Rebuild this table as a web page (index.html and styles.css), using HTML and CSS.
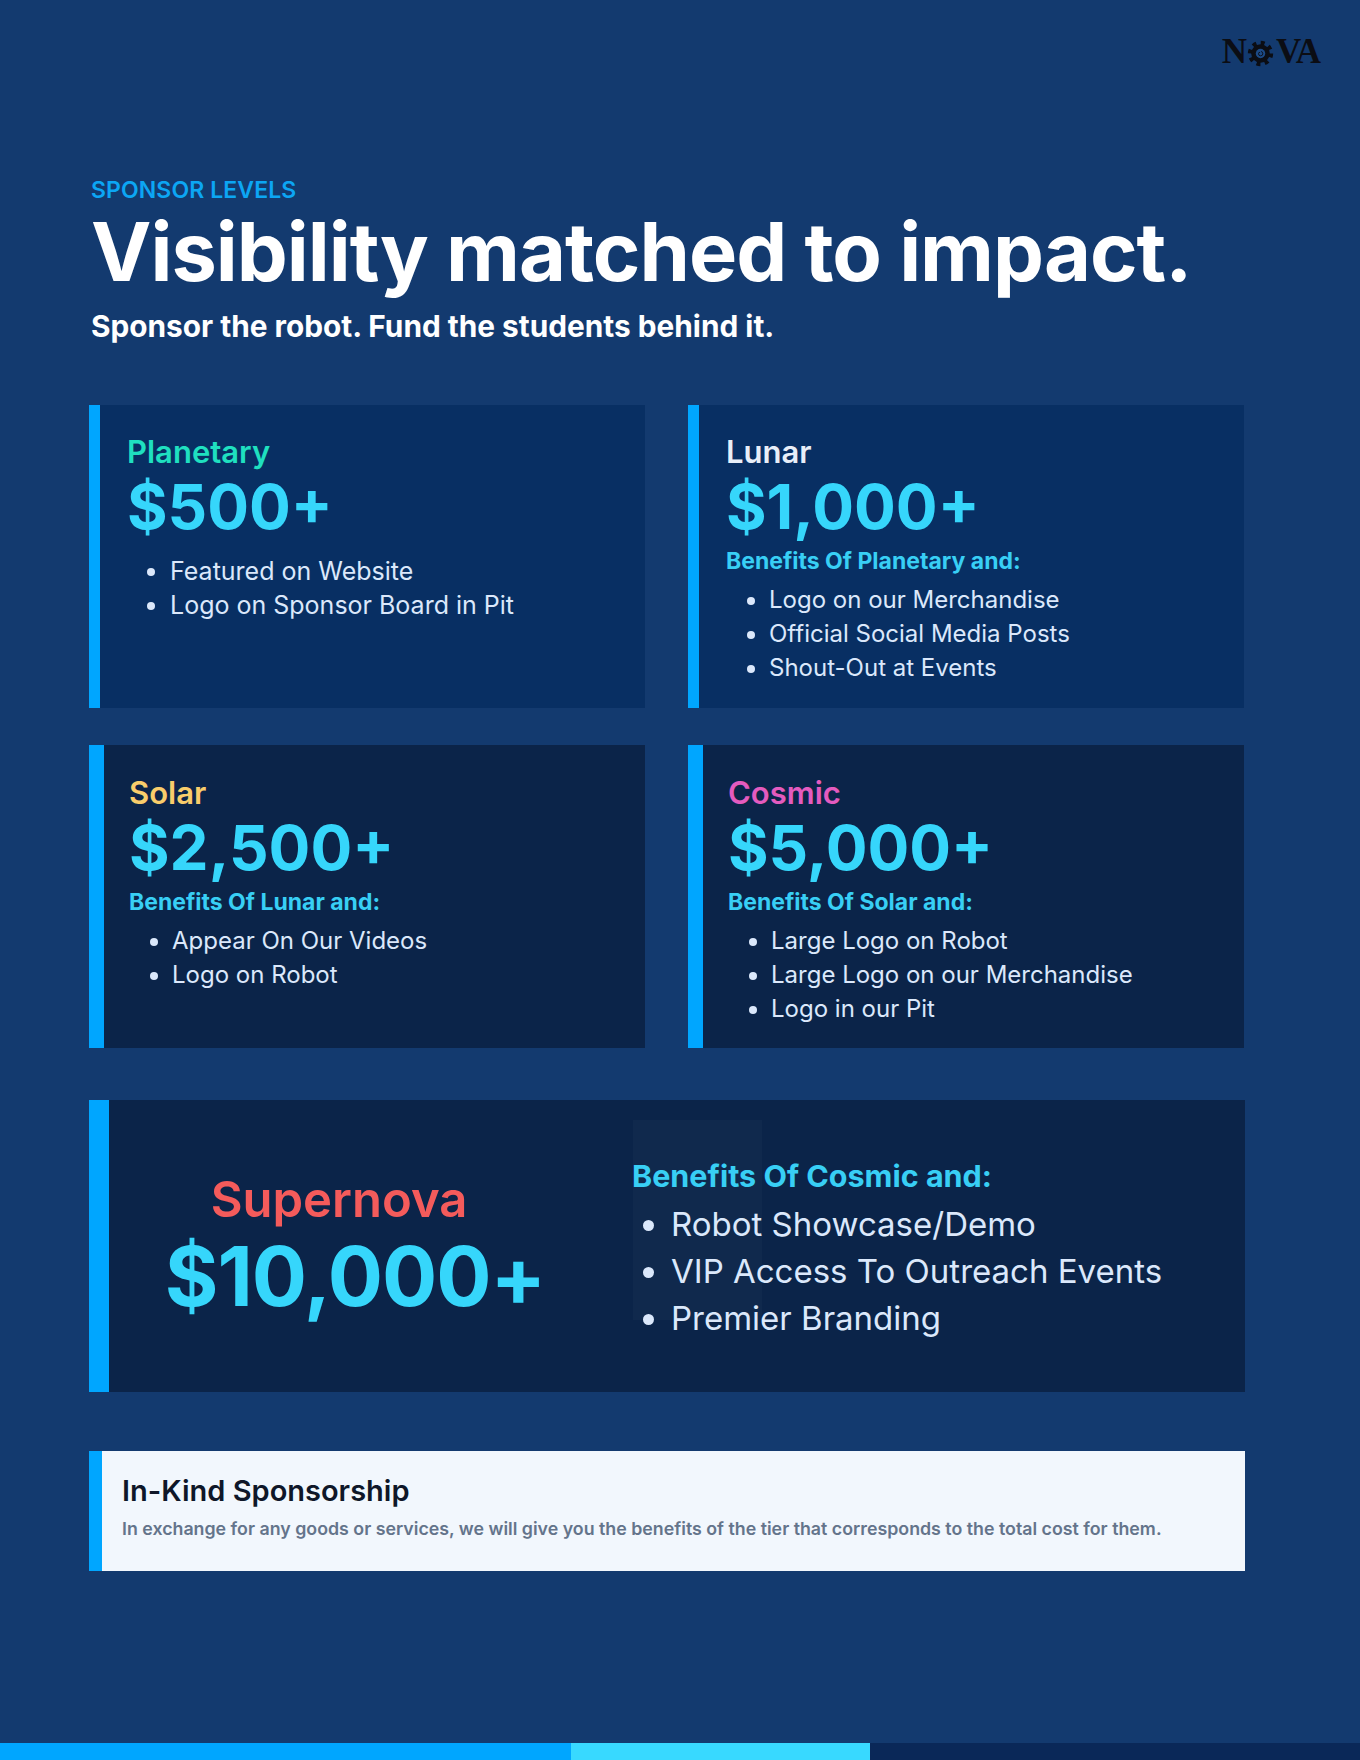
FILE: index.html
```html
<!DOCTYPE html>
<html lang="en">
<head>
<meta charset="utf-8">
<title>Sponsor Levels</title>
<link rel="stylesheet" href="styles.css">
</head>
<body>
<div class="page">
  <header class="topbar">
    <div class="logo" aria-label="NOVA">
      <span class="logo-letter">N</span>
      <svg class="logo-gear" viewBox="0 0 32 32" width="27" height="27" aria-hidden="true">
        <circle cx="16" cy="16" r="12.5" fill="none" stroke="#0b0d14" stroke-width="5" stroke-dasharray="4.6 5.2"/>
        <circle cx="16" cy="16" r="11" fill="#0b0d14"/>
        <circle cx="16" cy="16" r="5.6" fill="#1c4a86"/>
        <path d="M16.6 13.6 a2.6 2.6 0 1 1 -3 2.6 a1.7 1.7 0 0 1 1.9 -1.6" fill="none" stroke="#0b0d14" stroke-width="1.1"/>
      </svg>
      <span class="logo-letter">VA</span>
    </div>
  </header>

  <main class="content">
    <div class="intro">
      <p class="eyebrow">SPONSOR LEVELS</p>
      <h1 class="headline">Visibility matched to impact.</h1>
      <p class="subhead">Sponsor the robot. Fund the students behind it.</p>
    </div>

    <section class="tiers">
      <article class="tier tier-top">
        <h2 class="tier-name name-planetary">Planetary</h2>
        <p class="price">$500+</p>
        <ul class="perks perks-direct">
          <li>Featured on Website</li>
          <li>Logo on Sponsor Board in Pit</li>
        </ul>
      </article>

      <article class="tier tier-top">
        <h2 class="tier-name name-lunar">Lunar</h2>
        <p class="price">$1,000+</p>
        <p class="benefits">Benefits Of Planetary and:</p>
        <ul class="perks">
          <li>Logo on our Merchandise</li>
          <li>Official Social Media Posts</li>
          <li>Shout-Out at Events</li>
        </ul>
      </article>

      <article class="tier tier-low">
        <h2 class="tier-name name-solar">Solar</h2>
        <p class="price">$2,500+</p>
        <p class="benefits">Benefits Of Lunar and:</p>
        <ul class="perks">
          <li>Appear On Our Videos</li>
          <li>Logo on Robot</li>
        </ul>
      </article>

      <article class="tier tier-low">
        <h2 class="tier-name name-cosmic">Cosmic</h2>
        <p class="price">$5,000+</p>
        <p class="benefits">Benefits Of Solar and:</p>
        <ul class="perks">
          <li>Large Logo on Robot</li>
          <li>Large Logo on our Merchandise</li>
          <li>Logo in our Pit</li>
        </ul>
      </article>
    </section>

    <section class="supernova">
      <div class="super-left">
        <h2 class="super-name">Supernova</h2>
        <p class="super-price">$10,000+</p>
      </div>
      <div class="super-right">
        <div class="super-ghost" aria-hidden="true"></div>
        <p class="super-benefits">Benefits Of Cosmic and:</p>
        <ul class="super-perks">
          <li>Robot Showcase/Demo</li>
          <li>VIP Access To Outreach Events</li>
          <li>Premier Branding</li>
        </ul>
      </div>
    </section>

    <section class="inkind">
      <h2 class="inkind-title">In-Kind Sponsorship</h2>
      <p class="inkind-text">In exchange for any goods or services, we will give you the benefits of the tier that corresponds to the total cost for them.</p>
    </section>
  </main>

  <footer class="bottom-bar">
    <span class="seg seg-blue"></span>
    <span class="seg seg-cyan"></span>
    <span class="seg seg-navy"></span>
  </footer>
</div>
</body>
</html>
```

FILE: styles.css
```css
* { box-sizing: border-box; }

html, body {
  margin: 0;
  padding: 0;
}

body {
  background: #133a6f;
  font-family: Inter, "Noto Sans", "Liberation Sans", sans-serif;
  color: #ffffff;
}

.page {
  width: 1360px;
  min-height: 1760px;
  display: flex;
  flex-direction: column;
}

/* ---------- top bar / logo ---------- */
.topbar {
  display: flex;
  justify-content: flex-end;
  padding: 30px 40px 0 0;
}

.logo {
  display: flex;
  align-items: center;
  gap: 1px;
  height: 44px;
}

.logo-letter {
  font-family: "Liberation Serif", "DejaVu Serif", serif;
  font-weight: 700;
  font-size: 35px;
  line-height: 44px;
  color: #0b0d14;
  letter-spacing: -1px;
}

.logo-gear {
  display: block;
  margin: 2px 1px 0 0;
}

/* ---------- intro ---------- */
.content {
  padding-left: 89px;
  width: 1245px;
}

.intro {
  padding-left: 2px;
}

.eyebrow {
  margin: 103px 0 0 0;
  font-size: 23px;
  font-weight: 600;
  line-height: 27px;
  letter-spacing: 0.1px;
  color: #0ca6f4;
}

.headline {
  margin: 3px 0 0 0;
  font-size: 81px;
  font-weight: 700;
  line-height: 90px;
  letter-spacing: -1px;
  color: #ffffff;
}

.subhead {
  margin: 11px 0 0 0;
  font-size: 29.8px;
  font-weight: 700;
  line-height: 36px;
  color: #ffffff;
}

/* ---------- tier cards ---------- */
.tiers {
  margin-top: 61px;
  display: grid;
  grid-template-columns: 556px 556px;
  grid-auto-rows: 303px;
  column-gap: 43px;
  row-gap: 37px;
}

.tier {
  border-left: 11px solid #00a6ff;
  padding: 29px 24px 0 27px;
}

.tier-top {
  background: #082f63;
}

.tier-low {
  background: #0b2449;
  border-left-width: 15px;
  padding-left: 25px;
  padding-top: 30px;
}

.tier-name {
  margin: 0;
  font-size: 31px;
  font-weight: 600;
  line-height: 36px;
}

.name-planetary { color: #1fe0c0; }
.name-lunar { color: #e8eef8; }
.name-solar { color: #f9cd6b; }
.name-cosmic { color: #e45bbf; }

.price {
  margin: 3px 0 0 0;
  font-size: 62px;
  font-weight: 700;
  line-height: 68px;
  color: #36d6fb;
}

.benefits {
  margin: 6px 0 0 0;
  font-size: 23px;
  font-weight: 700;
  line-height: 28px;
  color: #38cff5;
}

.perks {
  margin: 8px 0 0 0;
  padding-left: 43px;
  font-size: 24px;
  font-weight: 400;
  line-height: 34px;
  color: #dbe8fb;
}

.perks-direct {
  margin-top: 13px;
  font-size: 25px;
}

.perks li::marker,
.super-perks li::marker {
  color: #dbe8fb;
}

/* ---------- supernova ---------- */
.supernova {
  margin-top: 52px;
  height: 292px;
  width: 1156px;
  background: #0b2449;
  border-left: 20px solid #00a6ff;
  display: grid;
  grid-template-columns: 460px 1fr;
  column-gap: 63px;
  align-items: center;
}

.super-left {
  text-align: center;
}

.super-name {
  margin: 0;
  font-size: 49px;
  font-weight: 600;
  line-height: 56px;
  color: #f45b5b;
}

.super-price {
  margin: 6px 0 0 0;
  padding-left: 32px;
  font-size: 82px;
  font-weight: 700;
  line-height: 86px;
  color: #36d6fb;
  letter-spacing: -1px;
}

.super-right {
  position: relative;
  padding-top: 7px;
}

.super-ghost {
  position: absolute;
  left: 1px;
  top: -30px;
  width: 129px;
  height: 200px;
  background: rgba(255, 255, 255, 0.025);
}

.super-benefits {
  position: relative;
  margin: 0;
  font-size: 30.5px;
  font-weight: 700;
  line-height: 38px;
  color: #38cff5;
}

.super-perks {
  position: relative;
  margin: 6px 0 0 0;
  padding-left: 39px;
  font-size: 33px;
  font-weight: 400;
  line-height: 47px;
  color: #dbe8fb;
}

/* ---------- in-kind ---------- */
.inkind {
  margin-top: 59px;
  width: 1156px;
  height: 120px;
  background: #f2f7fd;
  border-left: 13px solid #00a6ff;
  padding: 22px 30px 0 20px;
}

.inkind-title {
  margin: 0;
  font-size: 29px;
  font-weight: 600;
  line-height: 36px;
  color: #0f1729;
}

.inkind-text {
  margin: 8px 0 0 0;
  font-size: 17.8px;
  font-weight: 600;
  line-height: 24px;
  color: #64748b;
}

/* ---------- bottom bar ---------- */
.bottom-bar {
  margin-top: auto;
  display: flex;
  height: 17px;
}

.seg { display: block; height: 100%; }
.seg-blue { width: 571px; background: #00a6ff; }
.seg-cyan { width: 299px; background: #38d9ff; }
.seg-navy { flex: 1; background: #0a2858; }
```
